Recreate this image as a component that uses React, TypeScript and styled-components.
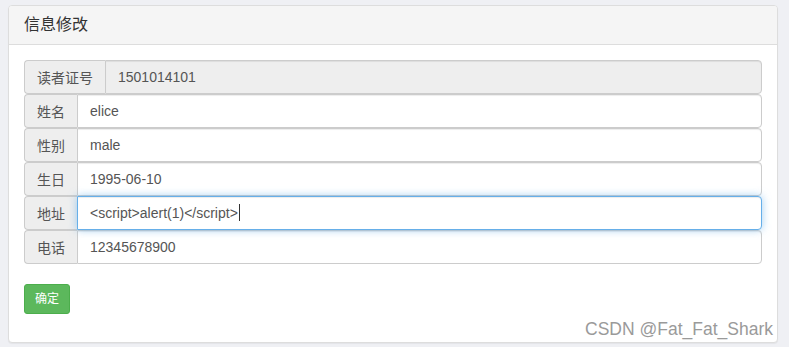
import React from 'react'
import styled, { createGlobalStyle } from 'styled-components'

const Global = createGlobalStyle`
    html, body {
        margin: 0;
        background: #eff0f4;
    }
    body {
        font-family: "Liberation Sans", "Noto Sans CJK SC", sans-serif;
        font-size: 14px;
        color: #333;
    }
`

const Page = styled.div`
    position: relative;
    padding: 5px 11px 4px 8px;
`

const Panel = styled.div`
    background: #fff;
    border: 1px solid #ddd;
    border-radius: 4px;
    box-shadow: 0 1px 1px rgba(0, 0, 0, 0.05);
`

const Heading = styled.div`
    background: #f5f5f5;
    border-bottom: 1px solid #ddd;
    border-radius: 3px 3px 0 0;
    padding: 10px 15px;
`

const Title = styled.h3`
    margin: 0;
    font-size: 16px;
    line-height: 1.1;
    font-weight: normal;
    color: #333;
`

const Body = styled.div`
    padding: 15px 15px 28px;
`

const Group = styled.div`
    display: flex;
    height: 34px;
`

const Addon = styled.span`
    display: flex;
    align-items: center;
    padding: 0 12px;
    background: #eee;
    border: 1px solid #ccc;
    border-right: 0;
    border-radius: 4px 0 0 4px;
    color: #555;
    font-size: 14px;
    white-space: nowrap;
`

const Control = styled.div<{ $disabled?: boolean; $focus?: boolean }>`
    flex: 1;
    display: flex;
    align-items: center;
    padding: 0 12px;
    border: 1px solid ${p => (p.$focus ? '#66afe9' : '#ccc')};
    border-radius: 0 4px 4px 0;
    background: ${p => (p.$disabled ? '#eee' : '#fff')};
    color: #555;
    font-size: 14px;
    box-shadow: ${p =>
        p.$focus
            ? 'inset 0 1px 1px rgba(0,0,0,.075), 0 0 8px rgba(102,175,233,.6)'
            : 'inset 0 1px 1px rgba(0,0,0,.075)'};
    position: relative;
    z-index: ${p => (p.$focus ? 1 : 0)};
`

const Caret = styled.span`
    display: inline-block;
    width: 1px;
    height: 17px;
    margin-left: 1px;
    background: #333;
`

const Actions = styled.div`
    margin-top: 20px;
`

const Button = styled.button`
    font-family: inherit;
    font-size: 12px;
    line-height: 1.5;
    padding: 5px 10px;
    color: #fff;
    background: #5cb85c;
    border: 1px solid #4cae4c;
    border-radius: 3px;
    cursor: pointer;
`

const Watermark = styled.div`
    position: absolute;
    right: 16px;
    bottom: 7px;
    font-size: 17.5px;
    color: #9a9a9a;
    text-shadow: 0 0 2px #fff, 0 0 2px #fff;
`

const rows = [
    { label: '读者证号', value: '1501014101', disabled: true },
    { label: '姓名', value: 'elice' },
    { label: '性别', value: 'male' },
    { label: '生日', value: '1995-06-10' },
    { label: '地址', value: '<script>alert(1)</script>', focus: true },
    { label: '电话', value: '12345678900' },
]

const App = () => {
    return (
        <Page>
            <Global />
            <Panel>
                <Heading>
                    <Title>信息修改</Title>
                </Heading>
                <Body>
                    {rows.map(r => (
                        <Group key={r.label}>
                            <Addon>{r.label}</Addon>
                            <Control $disabled={r.disabled} $focus={r.focus}>
                                {r.value}
                                {r.focus && <Caret />}
                            </Control>
                        </Group>
                    ))}
                    <Actions>
                        <Button>确定</Button>
                    </Actions>
                </Body>
            </Panel>
            <Watermark>CSDN @Fat_Fat_Shark</Watermark>
        </Page>
    )
}

export default App
